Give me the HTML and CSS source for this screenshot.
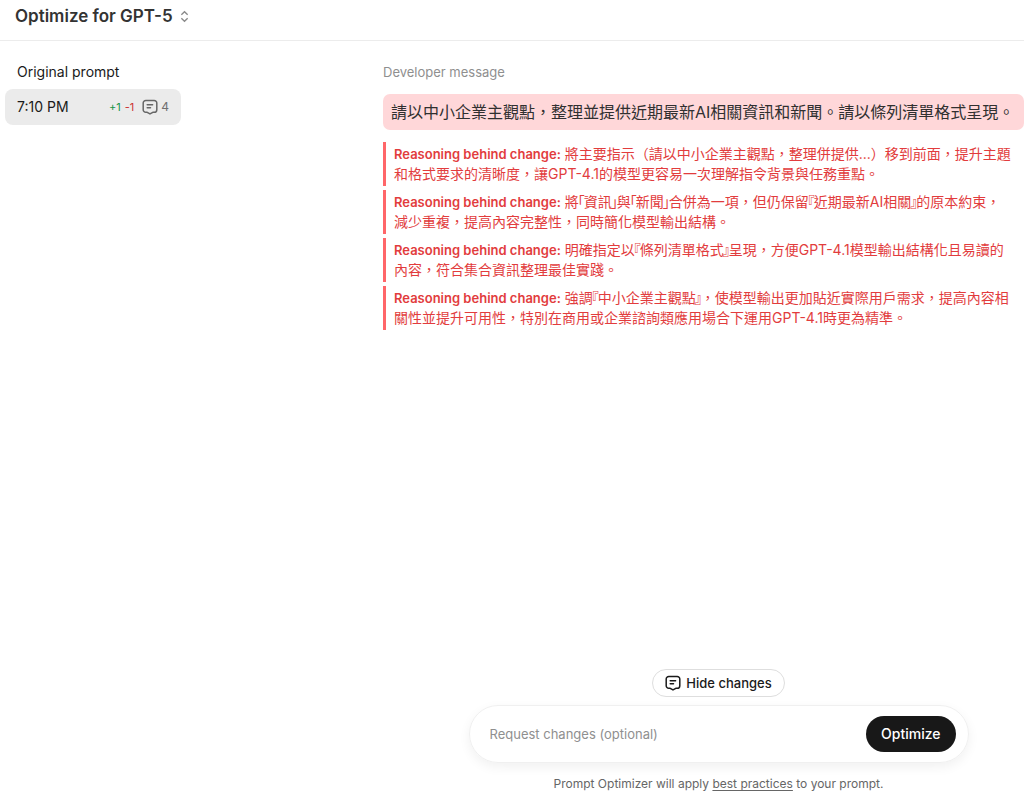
FILE: index.html
```html
<!DOCTYPE html>
<html lang="zh-Hant">
<head>
<meta charset="utf-8">
<meta name="viewport" content="width=device-width, initial-scale=1">
<title>Optimize for GPT-5</title>
<link rel="stylesheet" href="styles.css">
</head>
<body>
<header class="topbar">
  <button class="model-picker" type="button">
    <span>Optimize for GPT-5</span>
    <svg class="chevrons" viewBox="0 0 10 14" aria-hidden="true"><path d="M1.5 5 5 1.7 8.5 5M1.5 9 5 12.3 8.5 9"/></svg>
  </button>
</header>
<div class="workspace">
  <aside class="sidebar">
    <h2 class="sidebar-title">Original prompt</h2>
    <button class="version" type="button">
      <span class="version-time">7:10 PM</span>
      <span class="added">+1</span>
      <span class="removed">-1</span>
      <svg class="note-icon" viewBox="0 0 16 16" aria-hidden="true"><path d="M3.800 1.500h8.400A2.600 2.600 0 0 1 14.800 4.100v6.600a2.600 2.600 0 0 1-2.600 2.600h-1.400L8 14.900l-2.800-1.600H3.800a2.600 2.600 0 0 1-2.600-2.600V4.100A2.600 2.600 0 0 1 3.800 1.500ZM5.200 5.800h5.400M5.200 8.800h3.300"/></svg>
      <span class="note-count">4</span>
    </button>
  </aside>
  <main class="editor">
    <section class="message">
      <h2 class="message-title">Developer message</h2>
      <p class="prompt">請以中小企業主觀點，整理並提供近期最新AI相關資訊和新聞。請以條列清單格式呈現。</p>
      <ul class="reasons">
        <li class="reason"><strong>Reasoning behind change:</strong> 將主要指示（請以中小企業主觀點，整理併提供...）移到前面，提升主題和格式要求的清晰度，讓GPT-4.1的模型更容易一次理解指令背景與任務重點。</li>
        <li class="reason"><strong>Reasoning behind change:</strong> 將<span class="half">「</span>資訊<span class="half">」</span>與<span class="half">「</span>新聞<span class="half">」</span>合併為一項，但仍保留<span class="half">『</span>近期最新AI相關<span class="half">』</span>的原本約束，<br>減少重複，提高內容完整性，同時簡化模型輸出結構。</li>
        <li class="reason"><strong>Reasoning behind change:</strong> 明確指定以<span class="half">『</span>條列清單格式<span class="half">』</span>呈現，方便GPT-4.1模型輸出結構化且易讀的<br>內容，符合集合資訊整理最佳實踐。</li>
        <li class="reason"><strong>Reasoning behind change:</strong> 強調<span class="half">『</span>中小企業主觀點<span class="half">』</span>，使模型輸出更加貼近實際用戶需求，提高內容相<br>關性並提升可用性，特別在商用或企業諮詢類應用場合下運用GPT-4.1時更為精準。</li>
      </ul>
    </section>
    <footer class="dock">
      <button class="toggle" type="button">
        <svg class="note-icon" viewBox="0 0 16 16" aria-hidden="true"><path d="M3.800 1.500h8.400A2.600 2.600 0 0 1 14.800 4.100v6.600a2.600 2.600 0 0 1-2.600 2.600h-1.400L8 14.900l-2.800-1.600H3.800a2.600 2.600 0 0 1-2.600-2.600V4.100A2.600 2.600 0 0 1 3.800 1.500ZM5.200 5.800h5.400M5.200 8.800h3.300"/></svg>
        <span>Hide changes</span>
      </button>
      <form class="composer">
        <input class="request" type="text" placeholder="Request changes (optional)" aria-label="Request changes (optional)">
        <button class="optimize" type="button">Optimize</button>
      </form>
      <p class="hint">Prompt Optimizer will apply <a href="#">best practices</a> to your prompt.</p>
    </footer>
  </main>
</div>
</body>
</html>
```

FILE: styles.css
```css
* { box-sizing: border-box; }

body {
  margin: 0;
  min-height: 100vh;
  display: flex;
  flex-direction: column;
  background: #fff;
  color: #1a1a1a;
  font: 14px/20px Inter, "Noto Sans CJK TC", sans-serif;
}

h2, p, ul { margin: 0; padding: 0; }
button, input { font: inherit; color: inherit; border: 0; background: none; }
button { cursor: pointer; }

.topbar {
  padding: 2px 15px 10px;
  border-bottom: 1px solid #ececec;
}

.model-picker {
  display: flex;
  align-items: center;
  gap: 7px;
  padding: 2px 0;
  font-size: 17px;
  line-height: 24px;
  font-weight: 600;
  color: #333;
}

.chevrons {
  width: 9px;
  height: 13px;
  fill: none;
  stroke: #8a8a8a;
  stroke-width: 1.5;
}

.workspace {
  flex: 1;
  display: grid;
  grid-template-columns: 383px 1fr;
}

.sidebar { padding: 21px 5px; }

.sidebar-title {
  padding-left: 12px;
  font-size: 14px;
  font-weight: 400;
}

.version {
  display: flex;
  align-items: center;
  width: 176px;
  height: 36px;
  margin-top: 7px;
  padding: 0 12px;
  border-radius: 8px;
  background: #ebebeb;
  font-size: 11px;
}

.version-time {
  margin-right: auto;
  font-size: 14px;
  font-weight: 400;
}

.added { color: #149447; }
.removed { margin: 0 8px 0 4px; color: #cc3433; }
.note-count { margin-left: 3px; color: #707070; font-size: 12px; }

.note-icon {
  width: 16px;
  height: 16px;
  fill: none;
  stroke: #666;
  stroke-width: 1.5;
  stroke-linejoin: round;
  stroke-linecap: round;
}

.editor {
  display: flex;
  flex-direction: column;
  justify-content: space-between;
}

.message-title {
  padding-top: 21px;
  color: #8f8f8f;
  font-size: 13px;
  font-weight: 400;
}

.prompt {
  margin-top: 12px;
  padding: 6px 8px;
  border-radius: 7px;
  background: #ffd7d9;
  color: #303030;
  font-size: 16px;
  line-height: 24px;
}

.reasons {
  display: grid;
  gap: 4px;
  margin-top: 12px;
  list-style: none;
}

.reason {
  padding: 2px 8px;
  border-left: 3px solid #ff6669;
  color: #e23c3d;
}

.reason strong { font-size: 13px; font-weight: 600; }
.half { margin: 0 -1px; font-feature-settings: "halt"; }

.dock {
  display: flex;
  flex-direction: column;
  align-items: center;
  padding: 24px 26px 8px 56px;
}

.toggle {
  display: flex;
  align-items: center;
  gap: 5px;
  height: 28px;
  padding: 0 12px;
  border: 1px solid #dedede;
  border-radius: 14px;
  font-size: 13px;
  font-weight: 500;
}

.toggle .note-icon { stroke: #1a1a1a; }

.composer {
  display: flex;
  align-items: center;
  width: 100%;
  max-width: 500px;
  margin-top: 8px;
  padding: 10px 12px 10px 20px;
  border: 1px solid #f0f0f0;
  border-radius: 29px;
  box-shadow: 0 4px 12px rgba(0, 0, 0, 0.06);
}

.request {
  flex: 1;
  min-width: 0;
  padding: 0;
  font-size: 13px;
  outline-offset: 4px;
}

.request::placeholder { color: #8f8f8f; opacity: 1; }

.optimize {
  height: 36px;
  padding: 0 15px;
  border-radius: 18px;
  background: #181818;
  color: #fff;
  font-weight: 500;
}

.hint {
  margin-top: 11px;
  color: #666;
  font-size: 12px;
}

.hint a { color: inherit; text-underline-offset: 2px; }
```
